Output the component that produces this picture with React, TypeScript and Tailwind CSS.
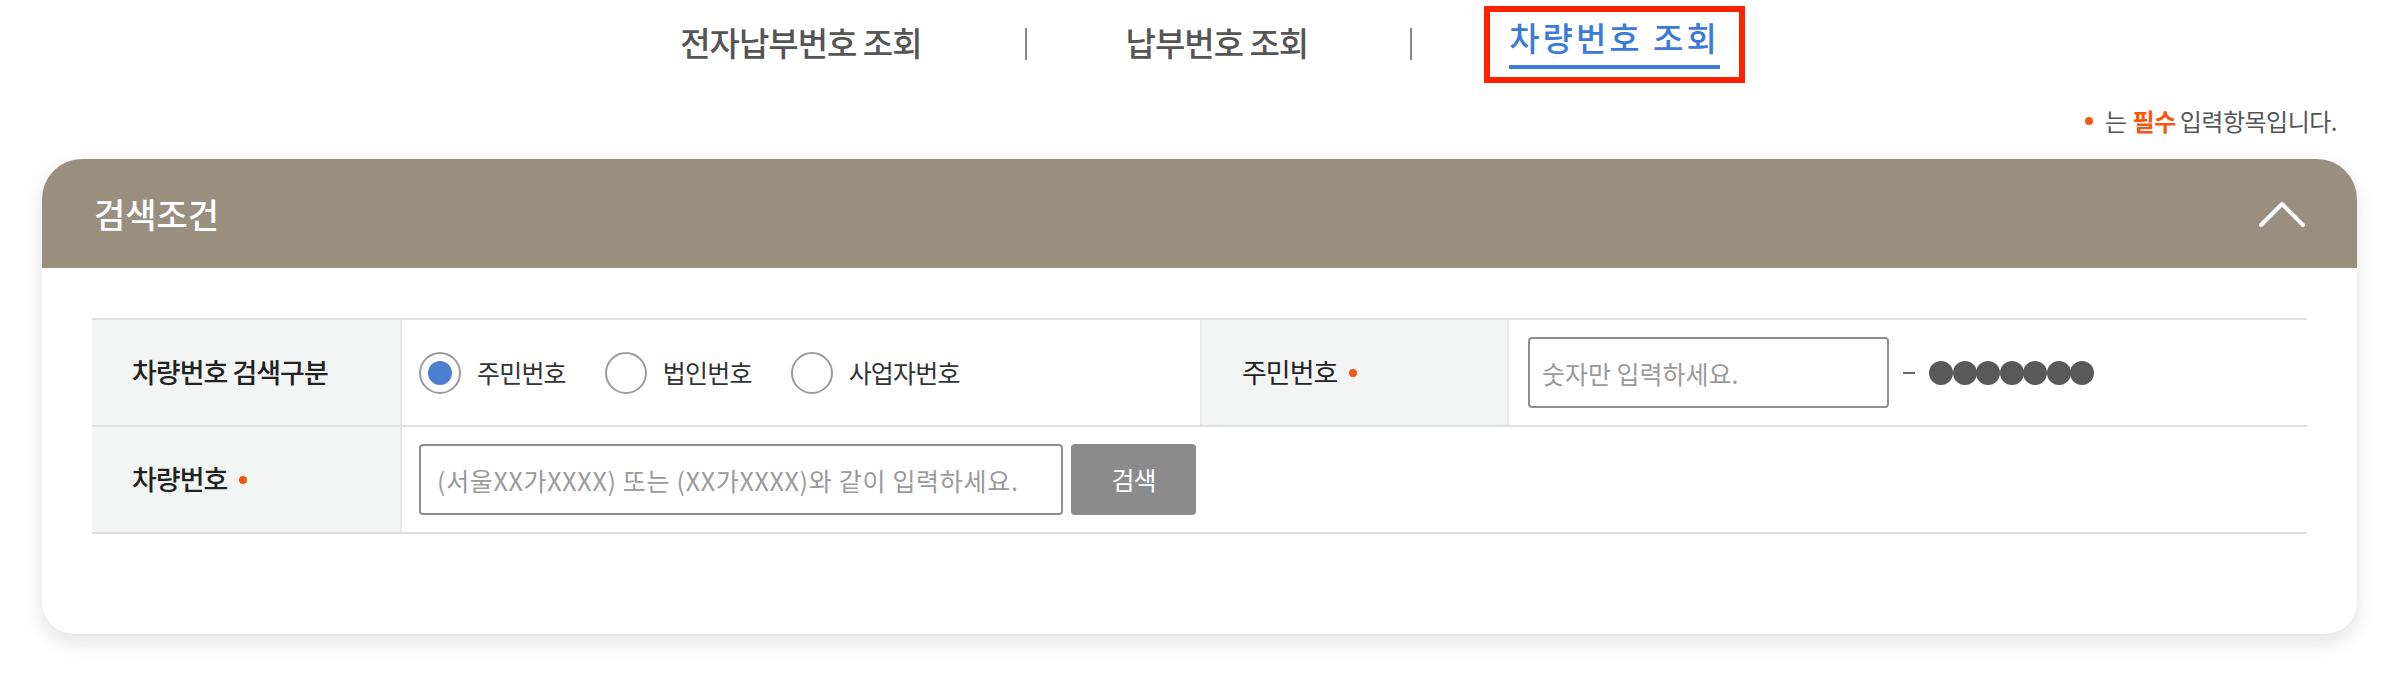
import React from "react";

function Radio({ checked, label }: { checked?: boolean; label: string }) {
  return (
    <label className="flex items-center">
      <span className="flex h-[42px] w-[42px] items-center justify-center rounded-full border-2 border-[#9b9b9b] bg-white">
        {checked && <span className="h-[24px] w-[24px] rounded-full bg-[#4c7fd1]" />}
      </span>
      <span className="ml-[16px] text-[25px] tracking-[-0.8px] text-[#333]">{label}</span>
    </label>
  );
}

function Dot() {
  return <span className="ml-[12px] inline-block h-[8px] w-[8px] rounded-full bg-[#f2590f]" />;
}

export default function App() {
  return (
    <div className="h-[684px] w-[2386px] overflow-hidden bg-white font-['Noto_Sans_CJK_KR',sans-serif]">
      {/* tabs */}
      <div className="flex h-[105px] items-start justify-center pl-[14px] pt-[20px]">
        <span className="text-[33px] font-medium leading-[44px] tracking-[-1px] text-[#555]">전자납부번호 조회</span>
        <span className="ml-[103px] mr-[99px] mt-[8px] h-[32px] w-[2px] bg-[#888]" />
        <span className="text-[33px] font-medium leading-[44px] tracking-[-1px] text-[#555]">납부번호 조회</span>
        <span className="ml-[102px] mr-[97px] mt-[8px] h-[32px] w-[2px] bg-[#888]" />
        <span className="relative -mt-[5px]">
          <span className="block border-b-[4px] border-[#3a7ad8] pb-[6px] text-[33px] font-medium leading-[44px] tracking-[3px] text-[#3a7ad8]">
            차량번호 조회
          </span>
          <span className="absolute -bottom-[14px] -left-[25px] -right-[25px] -top-[9px] border-[6px] border-[#ff2200]" />
        </span>
      </div>

      {/* required note */}
      <div className="flex h-[32px] items-center justify-end pr-[49px] text-[24px] leading-[32px] tracking-[-0.5px] text-[#555]">
        <span className="mr-[12px] inline-block h-[8px] w-[8px] rounded-full bg-[#f2590f]" />
        <span>는</span>
        <span className="ml-[6px] font-bold text-[#f2590f]">필수</span>
        <span className="ml-[4px]">입력항목입니다.</span>
      </div>

      {/* card */}
      <div className="ml-[42px] mr-[29px] mt-[22px] overflow-hidden rounded-t-[40px] rounded-b-[32px] bg-white shadow-[0_8px_20px_rgba(0,0,0,0.12)]">
        <div className="flex h-[109px] items-center justify-between bg-[#9a8f7f] pl-[52px] pr-[51px]">
          <h2 className="text-[34px] font-medium tracking-[0px] text-white">검색조건</h2>
          <svg width="48" height="28" viewBox="0 0 48 28" fill="none">
            <polyline points="3,25 24,4 45,25" stroke="white" strokeWidth="4" strokeLinecap="round" strokeLinejoin="round" />
          </svg>
        </div>
        <div className="px-[50px] pb-[100px] pt-[50px]">
          <div className="border-t-2 border-[#dedede]">
            <div className="grid h-[107px] grid-cols-[310px_798px_309px_1fr] border-b-2 border-[#dedede]">
              <div className="flex items-center border-r-2 border-[#e8e8e8] bg-[#f3f4f4] pl-[40px] text-[27px] font-medium tracking-[-1px] text-[#222]">
                차량번호 검색구분
              </div>
              <div className="flex items-center gap-[39px] pl-[17px]">
                <Radio checked label="주민번호" />
                <Radio label="법인번호" />
                <Radio label="사업자번호" />
              </div>
              <div className="flex items-center border-x-2 border-[#e8e8e8] bg-[#f3f4f4] pl-[40px] text-[27px] tracking-[-1px] text-[#222]">
                주민번호
                <Dot />
              </div>
              <div className="flex items-center pl-[19px]">
                <input
                  className="h-[71px] w-[361px] rounded-[4px] border-2 border-[#8f8f8f] px-[12px] text-[25px] tracking-[0px] text-[#333] outline-none placeholder:text-[#9a9a9a]"
                  placeholder="숫자만 입력하세요."
                />
                <span className="ml-[14px] h-[2px] w-[12px] bg-[#666]" />
                <span className="ml-[14px] flex">
                  {Array.from({ length: 7 }).map((_, i) => (
                    <span key={i} className="-mr-[0.5px] h-[24px] w-[24px] rounded-full bg-[#595959]" />
                  ))}
                </span>
              </div>
            </div>
            <div className="grid h-[107px] grid-cols-[310px_1fr] border-b-2 border-[#dedede]">
              <div className="flex items-center border-r-2 border-[#e8e8e8] bg-[#f3f4f4] pl-[40px] text-[27px] font-medium tracking-[-1px] text-[#222]">
                차량번호
                <Dot />
              </div>
              <div className="flex items-center pl-[17px]">
                <input
                  className="h-[71px] w-[644px] rounded-[4px] border-2 border-[#8f8f8f] px-[16px] text-[25px] tracking-[0.7px] text-[#333] outline-none placeholder:text-[#9a9a9a]"
                  placeholder="(서울XX가XXXX) 또는 (XX가XXXX)와 같이 입력하세요."
                />
                <button className="ml-[8px] h-[71px] w-[125px] rounded-[4px] bg-[#8b8b8b] text-[25px] tracking-[-1px] text-white">
                  검색
                </button>
              </div>
            </div>
          </div>
        </div>
      </div>
    </div>
  );
}
